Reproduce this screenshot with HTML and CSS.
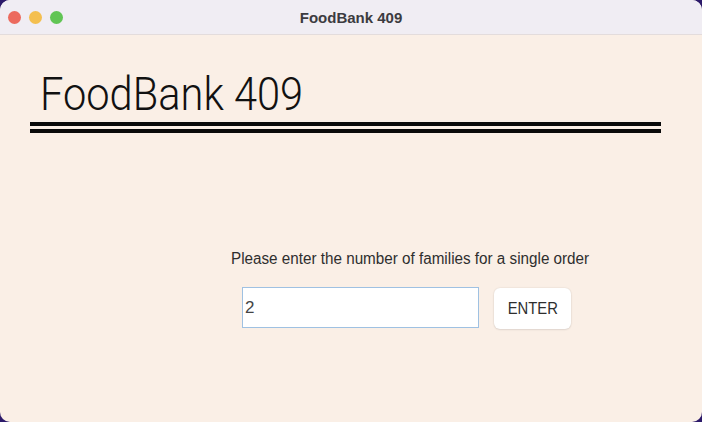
FILE: index.html
```html
<!DOCTYPE html>
<html lang="en">
<head>
<meta charset="utf-8">
<title>FoodBank 409</title>
<link rel="stylesheet" href="styles.css">
</head>
<body>
<div class="window">
  <header class="titlebar">
    <div class="lights">
      <span class="light red"></span>
      <span class="light yellow"></span>
      <span class="light green"></span>
    </div>
    <div class="wintitle">FoodBank 409</div>
    <div></div>
  </header>
  <main class="content">
    <h1 class="brand"><span class="squeeze">FoodBank 409</span></h1>
    <div class="rule"></div>
    <div class="rule second"></div>
    <section class="form">
      <p class="prompt"><span class="squeeze">Please enter the number of families for a single order</span></p>
      <div class="row">
        <div class="field"><span class="squeeze">2</span></div>
        <button class="enter" type="button"><span class="squeeze">ENTER</span></button>
      </div>
    </section>
  </main>
</div>
</body>
</html>
```

FILE: styles.css
```css
* { box-sizing: border-box; }
html, body { margin: 0; padding: 0; }
body {
  background: #2c1a6a;
  width: 702px;
  height: 422px;
  overflow: hidden;
  font-family: "Liberation Sans", Arial, sans-serif;
}
.window {
  width: 702px;
  height: 422px;
  border-radius: 10px;
  overflow: hidden;
  background: #faefe6;
  display: flex;
  flex-direction: column;
}
.titlebar {
  height: 35px;
  background: #f0edf3;
  border-bottom: 1px solid #e3dcdc;
  display: grid;
  grid-template-columns: 1fr auto 1fr;
  align-items: center;
  flex: none;
}
.lights {
  display: flex;
  gap: 8px;
  padding-left: 8px;
}
.light {
  width: 13px;
  height: 13px;
  border-radius: 50%;
  display: block;
}
.red { background: #ec6a5e; }
.yellow { background: #f4bf4f; }
.green { background: #61c554; }
.wintitle {
  font-weight: bold;
  font-size: 15px;
  color: #3c3b40;
  text-align: center;
}
.squeeze { display: inline-block; white-space: nowrap; transform-origin: left center; }

.content {
  flex: 1;
  padding: 0 41px 0 30px;
}
.brand {
  margin: 35px 0 0 10px;
  font-family: "Roboto", "Liberation Sans", sans-serif;
  font-weight: 300;
  font-size: 47px;
  line-height: 48px;
  color: #111;
}
.brand .squeeze { transform: scaleX(0.885); }
.rule {
  height: 4px;
  background: #0a0a0a;
  margin-top: 4px;
}
.rule.second { margin-top: 3px; }

.form {
  margin: 116px 0 0 201px;
}
.prompt {
  margin: 0;
  font-size: 16px;
  line-height: 20px;
  color: #2e2e2e;
}
.prompt .squeeze { transform: scaleX(0.952); }
.row {
  display: flex;
  align-items: flex-start;
  gap: 15px;
  margin: 18px 0 0 11px;
}
.field {
  width: 237px;
  height: 41px;
  background: #fff;
  border: 1px solid #9fc1e2;
  padding: 0 0 0 2px;
  display: flex;
  align-items: center;
  font-size: 17px;
  color: #444;
}
.enter {
  margin-top: 1px;
  width: 77px;
  height: 41px;
  background: #fff;
  border: none;
  border-radius: 6px;
  box-shadow: 0 0 2px rgba(0,0,0,0.12), 0 1px 2px rgba(0,0,0,0.08);
  font-family: "Liberation Sans", Arial, sans-serif;
  font-size: 17px;
  color: #2e2e2e;
  padding: 0;
}
.enter .squeeze { transform: scaleX(0.87); transform-origin: center; }
```
